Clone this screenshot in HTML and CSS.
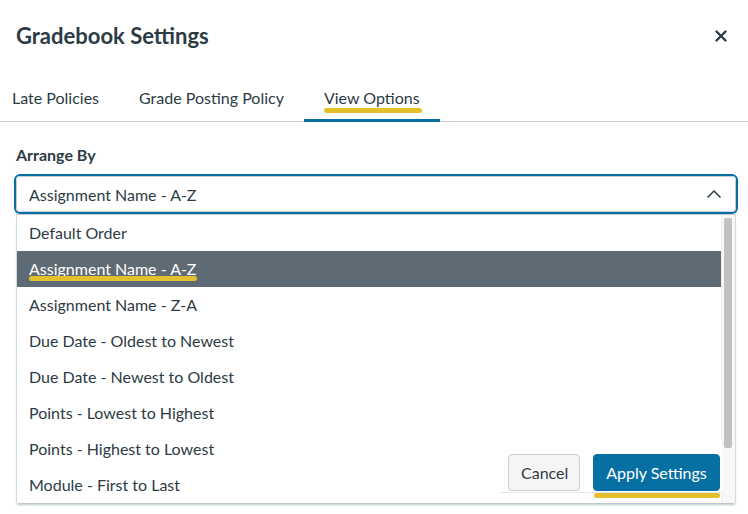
FILE: index.html
```html
<!DOCTYPE html>
<html>
<head>
<meta charset="utf-8">
<link rel="stylesheet" href="styles.css">
</head>
<body>
<div class="modal">
  <header class="header">
    <h1 class="title">Gradebook Settings</h1>
    <button class="close" aria-label="Close">
      <svg width="12" height="12" viewBox="0 0 12 12"><path d="M1.5 1.5 L10.5 10.5 M10.5 1.5 L1.5 10.5" stroke="#2d3b45" stroke-width="2.4" stroke-linecap="round"/></svg>
    </button>
  </header>
  <nav class="tabs">
    <div class="tab first">Late Policies</div>
    <div class="tab">Grade Posting Policy</div>
    <div class="tab active"><span class="mark">View Options</span></div>
  </nav>
  <section class="panel">
    <div class="label">Arrange By</div>
    <div class="select">
      <span>Assignment Name - A-Z</span>
      <svg class="chev" width="16" height="10" viewBox="0 0 16 10"><polyline points="1.5,8.5 8,2 14.5,8.5" fill="none" stroke="#2d3b45" stroke-width="1.5"/></svg>
    </div>
    <div class="list">
      <ul class="options">
        <li>Default Order</li>
        <li class="selected"><span class="mark2">Assignment Name - A-Z</span></li>
        <li>Assignment Name - Z-A</li>
        <li>Due Date - Oldest to Newest</li>
        <li>Due Date - Newest to Oldest</li>
        <li>Points - Lowest to Highest</li>
        <li>Points - Highest to Lowest</li>
        <li>Module - First to Last</li>
      </ul>
      <div class="scroll"><div class="thumb"></div></div>
    </div>
  </section>
  <footer class="footer">
    <button class="btn cancel">Cancel</button>
    <button class="btn apply">Apply Settings</button>
  </footer>
</div>
</body>
</html>
```
FILE: styles.css
```css
* { box-sizing: border-box; }
html, body { margin: 0; padding: 0; background: #fff; }
body {
  font-family: Lato, "Open Sans", "Liberation Sans", sans-serif;
  color: #2d3b45;
  width: 748px;
  height: 514px;
  overflow: hidden;
}
.modal { position: relative; height: 514px; }
.header {
  display: flex;
  justify-content: space-between;
  align-items: flex-start;
  padding: 22px 21px 0 16px;
  height: 76px;
}
.title {
  margin: 0;
  font-size: 22px;
  font-weight: 700;
  line-height: 28px;
  color: #2d3b45;
}
.close {
  border: 0;
  background: none;
  padding: 0;
  margin-top: 8px;
  width: 12px;
  height: 12px;
  display: flex;
}
.tabs {
  display: flex;
  border-bottom: 1px solid #c7cdd1;
  height: 46px;
}
.tab {
  padding: 0 20px;
  font-size: 16px;
  line-height: 43px;
  height: 46px;
  color: #2d3b45;
  border-bottom: 3px solid transparent;
  margin-bottom: -1px;
}
.tab.first { padding-left: 12px; padding-right: 20px; }
.tab.active { border-bottom-color: #0770a3; }
.mark { position: relative; }
.mark::after {
  content: "";
  position: absolute;
  left: 0;
  right: -2px;
  top: 20px;
  height: 5px;
  border-radius: 3px;
  background: #e3c12c;
}
.panel { padding: 21px 12px 0 16px; }
.label {
  font-size: 16px;
  font-weight: 700;
  line-height: 24px;
  margin-bottom: 9px;
}
.select {
  height: 36px;
  border: 1px solid #c7cdd1;
  border-radius: 4px;
  box-shadow: 0 0 0 2px #0770a3;
  display: flex;
  align-items: center;
  justify-content: space-between;
  padding: 0 13px 0 12px;
  font-size: 16px;
  margin-bottom: 2px;
}
.chev { margin-top: -1px; }
.list {
  display: flex;
  border: 1px solid #d5dadd;
  border-top: 1px solid #c7cdd1;
  border-bottom: 0;
  height: 289px;
  background: #fff;
  box-shadow: 0 3px 2px -1px #b9c7c9;
}
.options {
  list-style: none;
  margin: 0;
  padding: 0;
  flex: 1;
}
.options li {
  height: 36px;
  line-height: 35px;
  font-size: 16px;
  padding-left: 12px;
  color: #2d3b45;
}
.options li.selected {
  background: #5f6b74;
  color: #fff;
}
.mark2 { position: relative; }
.mark2::after {
  content: "";
  position: absolute;
  left: 0;
  right: -1px;
  top: 17px;
  height: 5px;
  border-radius: 3px;
  background: #e3c12c;
}
.scroll {
  width: 14px;
  background: #f7f7f7;
  border-left: 1px solid #ececec;
  padding: 3px 3px 0 2px;
}
.thumb {
  height: 230px;
  background: #c1c1c1;
  border-radius: 2px;
}
.footer {
  position: absolute;
  left: 500px;
  top: 440px;
  width: 222px;
  height: 53px;
  background: #fff;
  border-bottom: 1px solid #e4e7e9;
  display: flex;
  justify-content: flex-end;
  align-items: flex-start;
  gap: 13px;
  padding-top: 14px;
  padding-right: 2px;
}
.btn {
  font-family: Lato, "Open Sans", "Liberation Sans", sans-serif;
  font-size: 16px;
  height: 37px;
  border-radius: 4px;
  padding: 0 12px;
  cursor: pointer;
}
.cancel {
  background: #f5f5f5;
  border: 1px solid #c7cdd1;
  color: #2d3b45;
  width: 72px;
}
.apply {
  position: relative;
  background: #0770a3;
  border: 1px solid #0770a3;
  color: #fff;
  width: 127px;
}
.apply::after {
  content: "";
  position: absolute;
  left: 0;
  right: -1px;
  top: 38px;
  height: 5px;
  border-radius: 3px;
  background: #e3c12c;
}
```
